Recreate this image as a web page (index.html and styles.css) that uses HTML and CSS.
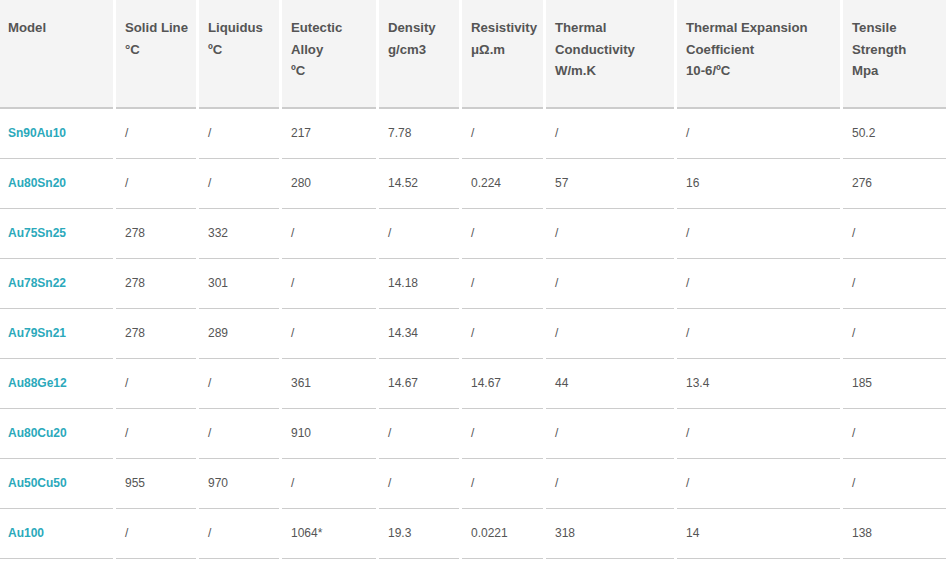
FILE: index.html
```html
<!DOCTYPE html>
<html lang="en">
<head>
<meta charset="utf-8">
<title>Alloy table</title>
<link rel="stylesheet" href="styles.css">
</head>
<body>
<table class="alloys">
  <colgroup>
    <col class="c1"><col class="c2"><col class="c3"><col class="c4"><col class="c5"><col class="c6"><col class="c7"><col class="c8"><col class="c9">
  </colgroup>
  <thead>
    <tr>
      <th class="first">Model</th>
      <th>Solid Line<br>°C</th>
      <th>Liquidus<br>ºC</th>
      <th>Eutectic<br>Alloy<br>ºC</th>
      <th>Density<br>g/cm3</th>
      <th>Resistivity<br>μΩ.m</th>
      <th>Thermal<br>Conductivity<br>W/m.K</th>
      <th>Thermal Expansion<br>Coefficient<br>10-6/ºC</th>
      <th>Tensile<br>Strength<br>Mpa</th>
    </tr>
  </thead>
  <tbody>
    <tr><td class="model">Sn90Au10</td><td>/</td><td>/</td><td>217</td><td>7.78</td><td>/</td><td>/</td><td>/</td><td>50.2</td></tr>
    <tr><td class="model">Au80Sn20</td><td>/</td><td>/</td><td>280</td><td>14.52</td><td>0.224</td><td>57</td><td>16</td><td>276</td></tr>
    <tr><td class="model">Au75Sn25</td><td>278</td><td>332</td><td>/</td><td>/</td><td>/</td><td>/</td><td>/</td><td>/</td></tr>
    <tr><td class="model">Au78Sn22</td><td>278</td><td>301</td><td>/</td><td>14.18</td><td>/</td><td>/</td><td>/</td><td>/</td></tr>
    <tr><td class="model">Au79Sn21</td><td>278</td><td>289</td><td>/</td><td>14.34</td><td>/</td><td>/</td><td>/</td><td>/</td></tr>
    <tr><td class="model">Au88Ge12</td><td>/</td><td>/</td><td>361</td><td>14.67</td><td>14.67</td><td>44</td><td>13.4</td><td>185</td></tr>
    <tr><td class="model">Au80Cu20</td><td>/</td><td>/</td><td>910</td><td>/</td><td>/</td><td>/</td><td>/</td><td>/</td></tr>
    <tr><td class="model">Au50Cu50</td><td>955</td><td>970</td><td>/</td><td>/</td><td>/</td><td>/</td><td>/</td><td>/</td></tr>
    <tr><td class="model">Au100</td><td>/</td><td>/</td><td>1064*</td><td>19.3</td><td>0.0221</td><td>318</td><td>14</td><td>138</td></tr>
  </tbody>
</table>
</body>
</html>
```
FILE: styles.css
```css
html, body {
  margin: 0;
  padding: 0;
  background: #ffffff;
}

body {
  font-family: "Liberation Sans", Arial, sans-serif;
  color: #555555;
}

.alloys {
  border-collapse: separate;
  border-spacing: 3px 0;
  margin-left: -3px;
  width: 952px;
  table-layout: fixed;
}

.c1 { width: 113px; }
.c2 { width: 80px; }
.c3 { width: 80px; }
.c4 { width: 94px; }
.c5 { width: 80px; }
.c6 { width: 81px; }
.c7 { width: 128px; }
.c8 { width: 163px; }
.c9 { width: 103px; }

.alloys th {
  box-sizing: border-box;
  height: 109px;
  background: #f4f4f4;
  border-bottom: 2px solid #cccccc;
  text-align: left;
  vertical-align: top;
  font-size: 13.2px;
  font-weight: bold;
  line-height: 21.5px;
  color: #555555;
  padding: 17px 8px 0 9px;
}

.alloys th.first {
  padding-left: 8px;
}

.alloys td {
  box-sizing: border-box;
  height: 50px;
  border-bottom: 1px solid #cccccc;
  font-size: 12px;
  color: #555555;
  vertical-align: middle;
  padding: 0 8px 2px 9px;
  white-space: nowrap;
}

.alloys td.model {
  color: #2ba9bb;
  font-weight: bold;
  padding-left: 8px;
}
```
